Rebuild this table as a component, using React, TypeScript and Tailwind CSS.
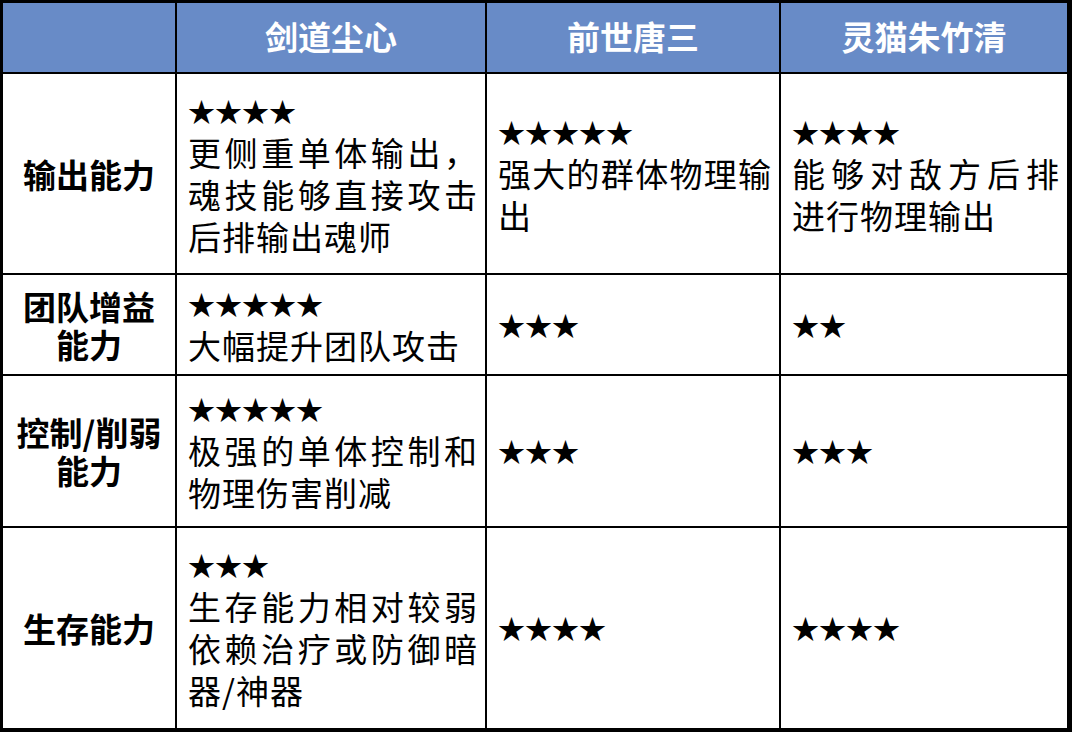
import React from "react";

const FONT = "font-['Noto_Sans_CJK_SC','Noto_Sans',sans-serif]";

type Cell = { stars: number; text?: string };

const rows: { label: React.ReactNode; cells: Cell[] }[] = [
  {
    label: "输出能力",
    cells: [
      { stars: 4, text: "更侧重单体输出，魂技能够直接攻击后排输出魂师" },
      { stars: 5, text: "强大的群体物理输出" },
      { stars: 4, text: "能够对敌方后排进行物理输出" },
    ],
  },
  {
    label: (
      <>
        团队增益
        <br />
        能力
      </>
    ),
    cells: [{ stars: 5, text: "大幅提升团队攻击" }, { stars: 3 }, { stars: 2 }],
  },
  {
    label: (
      <>
        控制/削弱
        <br />
        能力
      </>
    ),
    cells: [
      { stars: 5, text: "极强的单体控制和物理伤害削减" },
      { stars: 3 },
      { stars: 3 },
    ],
  },
  {
    label: "生存能力",
    cells: [
      { stars: 3, text: "生存能力相对较弱依赖治疗或防御暗器/神器" },
      { stars: 4 },
      { stars: 4 },
    ],
  },
];

const heroes = ["剑道尘心", "前世唐三", "灵猫朱竹清"];

function StarCell({ cell }: { cell: Cell }) {
  return (
    <div className="bg-white flex flex-col justify-center pl-[11px] pr-[7px] text-black">
      <div className="text-[27px] leading-[40px] whitespace-nowrap">
        {"★".repeat(cell.stars)}
      </div>
      {cell.text && (
        <div className="text-[33px] leading-[42px] tracking-[1px] text-justify">
          {cell.text}
        </div>
      )}
    </div>
  );
}

export default function App() {
  return (
    <div
      className={`w-[1072px] h-[732px] bg-black pt-[3px] pl-[3px] pr-[5px] pb-[4px] ${FONT}`}
    >
      <div className="grid grid-cols-[172px_308px_292px_286px] grid-rows-[69px_199px_99px_150px_200px] gap-[2px] h-full">
        {/* header */}
        <div className="bg-[#688bc7]" />
        {heroes.map((h) => (
          <div
            key={h}
            className="bg-[#688bc7] flex items-center justify-center text-white font-bold text-[33px] pb-[1px]"
          >
            {h}
          </div>
        ))}

        {rows.map((row, i) => (
          <React.Fragment key={i}>
            <div className="bg-white flex items-center justify-center text-center text-black font-bold text-[33px] leading-[38px]">
              <div>{row.label}</div>
            </div>
            {row.cells.map((c, j) => (
              <StarCell key={j} cell={c} />
            ))}
          </React.Fragment>
        ))}
      </div>
    </div>
  );
}
